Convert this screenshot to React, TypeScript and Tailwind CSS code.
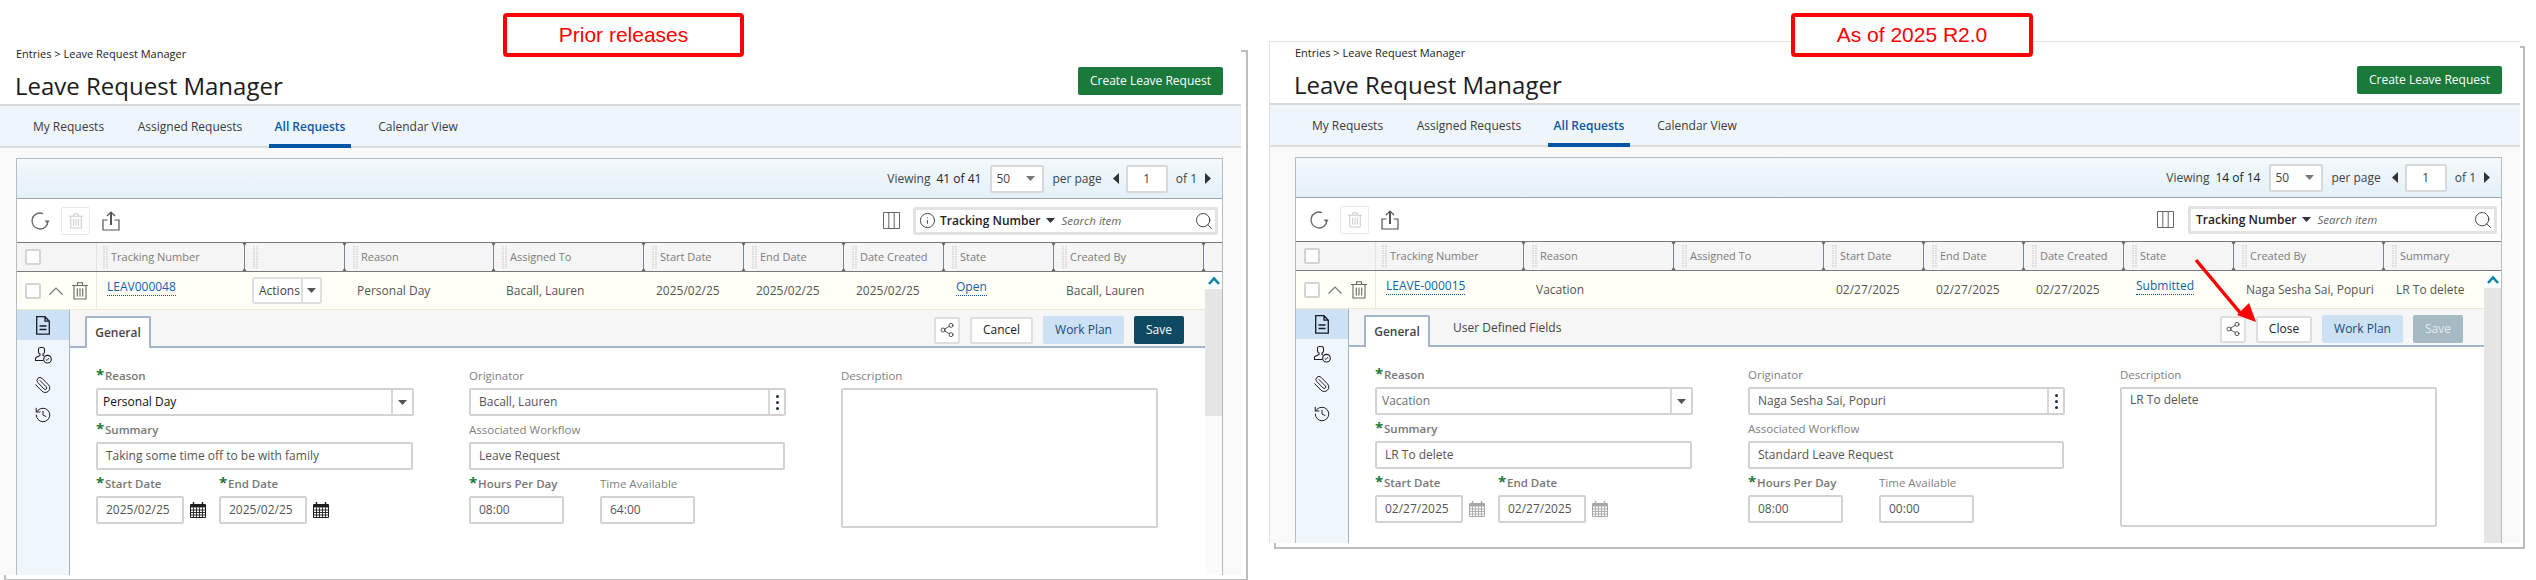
import React from "react";
import { Info, Search, Paperclip, History, Share2 } from "lucide-react";

type Col = { w: string; label: string; grip?: boolean; cell?: React.ReactNode; first?: boolean };

const Caret = ({ c = "#555" }: { c?: string }) => (
  <svg width="9" height="5" viewBox="0 0 9 5" className="shrink-0"><path d="M0 0h9L4.5 5z" fill={c} /></svg>
);

const Sep = () => (
  <svg width="5" height="28" viewBox="0 0 5 28" className="shrink-0 -ml-[2px]">
    <path d="M2.5 0v28" stroke="#7b8590" strokeWidth="1" />
    <path d="M.5 0h4L3 2.5H2zM.5 28h4L3 25.5H2z" fill="#666" />
  </svg>
);

const Grip = () => (
  <svg width="5" height="23" viewBox="0 0 5 23" className="shrink-0">
    <path d="M1 0v23M4 0v23" stroke="#d2d2d2" strokeWidth="1.5" strokeDasharray="1.5 1" />
  </svg>
);

const Refresh = () => (
  <svg width="20" height="20" viewBox="0 0 20 20" fill="none" className="shrink-0">
    <path d="M13 2.6A8 8 0 1 0 18 10" stroke="#666" strokeWidth="1.3" />
    <path d="M14.6 9.4h5l-2.5 3z" fill="#666" />
  </svg>
);

const Trash = ({ c, s = 16 }: { c: string; s?: number }) => (
  <svg width={s} height={s + 2} viewBox="0 0 16 18" fill="none" className="shrink-0" stroke={c} strokeWidth="1.1">
    <path d="M0 3.5h16M5.5 3.5V.8h5v2.7M2 3.5V17h12V3.5M5.3 6.5v8M8 6.5v8M10.7 6.5v8" />
  </svg>
);

const Upload = () => (
  <svg width="18" height="20" viewBox="0 0 18 20" fill="none" className="shrink-0" stroke="#555" strokeWidth="1.2">
    <path d="M5.5 9H1v10h16V9h-4.5" />
    <path d="M9 14V1.5" strokeWidth="2" />
    <path d="M5 5l4-4 4 4" />
  </svg>
);

const ColumnsIcon = () => (
  <svg width="17" height="17" viewBox="0 0 17 17" fill="none" stroke="#666" strokeWidth="1" className="shrink-0">
    <path d="M.5.5h16v16H.5zM5.8.5v16M11.2.5v16" />
  </svg>
);

const Chev = () => (
  <svg width="14" height="8" viewBox="0 0 14 8" fill="none" stroke="#777" strokeWidth="1.2" className="shrink-0"><path d="M.5 7.5L7 1l6.5 6.5" /></svg>
);

const DocIcon = () => (
  <svg width="14" height="19" viewBox="0 0 14 19" fill="none" stroke="#1a1a2a" strokeWidth="1.3">
    <path d="M.7.7h8.3l4.3 4.5v13H.7zM9 .7v4.5h4.3M3.5 10h7M3.5 13.5h7" />
  </svg>
);

const PersonIcon = () => (
  <svg width="17" height="18" viewBox="0 0 17 18" fill="none" stroke="#1a1a2a" strokeWidth="1.1">
    <path d="M5 1.5h2.5a2 2 0 0 1 2 2v2.5a2 2 0 0 1-1.5 2v1.5l1 .5M4.8 1.5a2 2 0 0 0-1.3 2v2.5a2 2 0 0 0 1.5 2v1.5L1 11.5a1.5 1.5 0 0 0-.6 1.2v1.8h8" />
    <circle cx="12.5" cy="13.2" r="3.8" />
    <path d="M10.8 13.4l1.2 1.1 2-2.4" strokeWidth=".9" />
  </svg>
);

const Cal = ({ c }: { c: string }) => (
  <svg width="16" height="16" viewBox="0 0 16 16" fill="none" className="shrink-0">
    <path d="M.5 2.5h15v13H.5z" stroke={c} />
    <path d="M1 2.5h14v3H1z" fill={c} />
    <path d="M3.5 0v3.5M12.5 0v3.5" stroke={c} strokeWidth="1.4" />
    <path d="M.5 8h15M.5 10.5h15M.5 13h15M3.5 5.5v10M6.5 5.5v10M9.5 5.5v10M12.5 5.5v10" stroke={c} strokeWidth=".9" />
  </svg>
);

const Link = ({ children }: { children: React.ReactNode }) => (
  <span className="inline-block text-[12px] leading-[15px] pb-[1px] -mt-[6px] text-[#1261ac] border-b border-dotted border-[#0a56a5]">{children}</span>
);

const Check = () => <div className="w-[16px] h-[16px] border-2 border-[#d4d4d4] rounded-[2px] bg-white shrink-0" />;

const Label = ({ req, children }: { req?: boolean; children: React.ReactNode }) => (
  <div className="h-[26px] flex items-end pb-[4px]">
    <span className={`text-[11.5px] leading-[16px] flex ${req ? "text-[#777] font-semibold" : "text-[#808080]"}`}>
      {req && <span className="text-[#1a7a3c] font-bold text-[15px] leading-[15px] w-[9px] -mt-[1px]">*</span>}
      {children}
    </span>
  </div>
);

const boxCls = "h-[28px] border-2 border-[#d2d2d2] rounded-[2px] bg-white flex items-center text-[12px] text-[#555]";

function Form({ d }: { d: Data }) {
  const cal = d.disabled ? "#a6a6a6" : "#1e1e1e";
  const v = d.disabled ? "text-[#6f6f6f]" : "text-[#111]";
  return (
    <div className="flex pl-[26px] pt-[14px] gap-[55px]">
      <div className="w-[318px] shrink-0">
        <Label req>Reason</Label>
        <div className={`${boxCls} pl-[5px]`}>
          <span className={`flex-1 ${v}`}>{d.reason}</span>
          <div className="w-[21px] h-full border-l-2 border-[#d8d8d8] flex items-center justify-center"><Caret /></div>
        </div>
        <Label req>Summary</Label>
        <div className={`${boxCls} w-[317px] pl-[8px]`}>{d.summary}</div>
        <div className="flex">
          <div className="w-[123px]">
            <Label req>Start Date</Label>
            <div className="flex items-center gap-[6px]">
              <div className={`${boxCls} w-[88px] pl-[8px]`}>{d.date}</div>
              <Cal c={cal} />
            </div>
          </div>
          <div>
            <Label req>End Date</Label>
            <div className="flex items-center gap-[6px]">
              <div className={`${boxCls} w-[88px] pl-[8px]`}>{d.date}</div>
              <Cal c={cal} />
            </div>
          </div>
        </div>
      </div>
      <div className="w-[317px] shrink-0">
        <Label>Originator</Label>
        <div className={`${boxCls} pl-[8px]`}>
          <span className="flex-1">{d.orig}</span>
          <div className="w-[16px] h-full border-l-2 border-[#d8d8d8] flex flex-col items-center justify-center gap-[3px]">
            <i className="w-[3px] h-[3px] rounded-full bg-[#1b2a4a]" />
            <i className="w-[3px] h-[3px] rounded-full bg-[#1b2a4a]" />
            <i className="w-[3px] h-[3px] rounded-full bg-[#1b2a4a]" />
          </div>
        </div>
        <Label>Associated Workflow</Label>
        <div className={`${boxCls} w-[316px] pl-[8px]`}>{d.flow}</div>
        <div className="flex">
          <div className="w-[131px]">
            <Label req>Hours Per Day</Label>
            <div className={`${boxCls} w-[95px] pl-[8px]`}>08:00</div>
          </div>
          <div>
            <Label>Time Available</Label>
            <div className={`${boxCls} w-[95px] pl-[8px]`}>{d.avail}</div>
          </div>
        </div>
      </div>
      <div className="w-[317px] shrink-0">
        <Label>Description</Label>
        <div className="h-[140px] border-2 border-[#d2d2d2] rounded-[2px] bg-white text-[12px] text-[#555] px-[8px] py-[2px]">{d.desc}</div>
      </div>
    </div>
  );
}

type Data = {
  isRight: boolean;
  disabled: boolean;
  count: string;
  cols: Col[];
  reason: string;
  summary: string;
  date: string;
  orig: string;
  flow: string;
  avail: string;
  desc: string;
  closeLabel: string;
};

function Panel({ d }: { d: Data }) {
  const inset = d.isRight ? "ml-[9px]" : "";
  return (
    <div className={`relative flex flex-col shrink-0 ${d.isRight ? "w-[1251px] h-[502px] ml-[28px] border-t border-l border-[#e2e2e2]" : "w-[1241px] h-[534px] border-t border-transparent"} mt-[41px]`}>
      <div className={`absolute border-2 border-[#bdbdbd] -z-10 ${d.isRight ? "left-[4px] top-[4px] -right-[5px] -bottom-[6px]" : "left-[4px] top-[8px] -right-[7px] -bottom-[6px]"}`} />
      <header className={`bg-white border-b-2 border-[#d8d8d8] flex justify-between shrink-0 ${d.isRight ? "h-[63px]" : "h-[64px] pt-[1px]"}`}>
        <div className={`${inset} pl-[15px] pt-[4px]`}>
          <div className="text-[11px] leading-[14px] text-[#222] pl-[1px]">Entries &gt; Leave Request Manager</div>
          <h1 className="text-[24px] leading-[32px] text-[#1c1c1c] mt-[9px]">Leave Request Manager</h1>
        </div>
        <button className="mt-[24px] mr-[18px] w-[145px] h-[28px] bg-[#1a7a3c] rounded-[2px] text-white text-[12px]">Create Leave Request</button>
      </header>
      <nav className="h-[42px] bg-[#eff6fb] border-b-2 border-[#dcdcdc] shrink-0">
        <div className={`${inset} pl-[26px] flex gap-[20px] h-[42px] text-[12px] text-[#3a3a3a]`}>
          <span className="w-[85px] h-full flex items-center justify-center">My Requests</span>
          <span className="w-[118px] h-full flex items-center justify-center">Assigned Requests</span>
          <span className="w-[82px] h-full flex items-center justify-center text-[#0a56a5] font-semibold border-b-4 border-[#0054a6] pt-[4px]">All Requests</span>
          <span className="w-[94px] h-full flex items-center justify-center">Calendar View</span>
        </div>
      </nav>
      <div className="flex-1 bg-[#f9f9f9] pt-[10px] min-h-0 flex">
        <div className={`${d.isRight ? "ml-[25px]" : "ml-[16px]"} w-[1207px] border-t border-l border-r border-[#b5bdc4] flex flex-col bg-white min-h-0 overflow-hidden`}>
          <div className="h-[40px] shrink-0 bg-gradient-to-b from-[#f4f9fc] to-[#e3f0f8] border-b border-[#9aa4ab] flex items-center justify-end pr-[11px] text-[12px] text-[#444]">
            <span>Viewing</span>
            <span className="ml-[6px] text-[#222]">{d.count}</span>
            <div className="ml-[9px] w-[54px] h-[28px] border-2 border-[#d8d8d8] rounded-[2px] bg-white flex items-center justify-between pl-[4px] pr-[7px]"><span>50</span><Caret c="#777" /></div>
            <span className="ml-[8px]">per page</span>
            <svg width="6" height="11" viewBox="0 0 6 11" className="ml-[11px]"><path d="M6 0v11L0 5.5z" fill="#333" /></svg>
            <div className="ml-[7px] w-[42px] h-[28px] border-2 border-[#d8d8d8] rounded-[2px] bg-white flex items-center justify-center">1</div>
            <span className="ml-[8px]">of 1</span>
            <svg width="6" height="11" viewBox="0 0 6 11" className="ml-[8px]"><path d="M0 0v11l6-5.5z" fill="#333" /></svg>
          </div>
          <div className="h-[43px] shrink-0 flex items-center pl-[13px] pr-[4px]">
            <Refresh />
            <div className="ml-[11px] w-[29px] h-[28px] border border-[#e8e8e8] rounded-[2px] flex items-center justify-center"><Trash c="#c8c8c8" s={14} /></div>
            <div className="ml-[12px]"><Upload /></div>
            <div className={`ml-auto ${d.isRight ? "mr-[14px]" : "mr-[13px]"}`}><ColumnsIcon /></div>
            <div className={`${d.isRight ? "w-[309px]" : "w-[305px]"} h-[28px] border-[3px] border-[#e2e2e2] rounded-[2px] bg-white flex items-center text-[#444]`}>
              {!d.isRight && <Info size={17} strokeWidth={1.25} className="ml-[3px] mr-[4px] shrink-0 text-[#333]" />}
              <span className={`text-[12px] font-semibold text-[#222] whitespace-nowrap ${d.isRight ? "ml-[5px]" : ""}`}>Tracking Number</span>
              <span className="ml-[5px] mr-[7px]"><Caret c="#334" /></span>
              <span className="text-[11.5px] italic text-[#666]">Search item</span>
              <Search size={20} strokeWidth={1} className="ml-auto mr-[1px] text-[#222]" />
            </div>
          </div>
          <div className="h-[30px] shrink-0 bg-[#f5f5f5] border-y border-[#7a7a7a] flex text-[11px] text-[#7c7c7c]">
            <div className="w-[80px] shrink-0 flex items-center pl-[8px] border-r border-[#e3e3e3]"><Check /></div>
            {d.cols.map((c, i) => (
              <div key={i} className={`flex items-center shrink-0 ${c.w}`}>
                {!c.first && <Sep />}
                {c.grip && <span className="ml-[6px]"><Grip /></span>}
                <span className="ml-[3px] whitespace-nowrap">{c.label}</span>
              </div>
            ))}
          </div>
          <div className="flex-1 flex min-h-0">
            <div className="flex-1 min-w-0 flex flex-col">
              <div className="h-[38px] shrink-0 bg-[#fffff7] border-b border-[#ece9d0] flex text-[12px] text-[#555]">
                <div className="w-[80px] shrink-0 flex items-center pl-[8px] border-r border-[#eceadb]">
                  <Check />
                  <span className="ml-[8px]"><Chev /></span>
                  <span className="ml-[9px]"><Trash c="#666" /></span>
                </div>
                {d.cols.map((c, i) => (
                  <div key={i} className={`flex items-center shrink-0 whitespace-nowrap ${c.first ? "pl-[10px]" : "pl-[13px]"} ${c.w}`}>{c.cell}</div>
                ))}
              </div>
              <div className="flex-1 flex min-h-0">
                <aside className="w-[53px] shrink-0 bg-[#f0f7fc] border-r border-[#a3b4c6] flex flex-col">
                  <div className="h-[30px] bg-[#cde1f5] flex items-center justify-center"><DocIcon /></div>
                  <div className="h-[30px] flex items-center justify-center"><PersonIcon /></div>
                  <div className="h-[30px] flex items-center justify-center"><Paperclip size={18} strokeWidth={1.3} className="text-[#1a1a2a] -scale-x-100" /></div>
                  <div className="h-[30px] flex items-center justify-center"><History size={18} strokeWidth={1.3} className="text-[#1a1a2a]" /></div>
                </aside>
                <div className="flex-1 min-w-0 flex flex-col">
                  <div className="h-[38px] shrink-0 bg-[#f6f6f6] border-b-2 border-[#a5b6ca] flex items-end pl-[15px] pr-[21px] relative">
                    <div className="w-[66px] h-[32px] -mb-[2px] bg-white border-2 border-b-0 border-[#a5b6ca] rounded-t-[2px] flex items-center justify-center text-[12px] font-semibold text-[#444]">General</div>
                    {d.isRight && <span className="ml-[23px] mb-[8px] text-[12px] text-[#444]">User Defined Fields</span>}
                    <div className="ml-auto self-start mt-[6px] flex items-center">
                      <div className="w-[26px] h-[27px] border-2 border-[#dedede] rounded-[2px] bg-white flex items-center justify-center"><Share2 size={16} strokeWidth={1.1} className="text-[#222]" /></div>
                      <button className={`ml-[10px] ${d.isRight ? "w-[56px]" : "w-[63px]"} h-[27px] border-2 border-[#dedede] rounded-[2px] bg-white text-[12px] text-[#222]`}>{d.closeLabel}</button>
                      <button className="ml-[10px] w-[81px] h-[28px] bg-[#cde1f5] rounded-[2px] text-[12px] text-[#1c4a6e]">Work Plan</button>
                      <button className={`ml-[10px] w-[50px] h-[28px] rounded-[2px] text-[12px] ${d.disabled ? "bg-[#a6bac3] text-[#e2eaee]" : "bg-[#0f4a63] text-white"}`}>Save</button>
                    </div>
                  </div>
                  <Form d={d} />
                </div>
              </div>
            </div>
            <div className="w-[17px] shrink-0 flex flex-col bg-[#fbfbfb]">
              <div className="h-[17px] bg-white flex items-center justify-center shrink-0">
                <svg width="12" height="9" viewBox="0 0 12 9" fill="none" stroke="#0a84a8" strokeWidth="2.6"><path d="M1 8l5-5.5L11 8" /></svg>
              </div>
              <div className={`bg-[#e5e5e5] ${d.isRight ? "flex-1" : "h-[127px]"}`} />
            </div>
          </div>
        </div>
      </div>
    </div>
  );
}

const leftData: Data = {
  isRight: false,
  disabled: false,
  count: "41 of 41",
  reason: "Personal Day",
  summary: "Taking some time off to be with family",
  date: "2025/02/25",
  orig: "Bacall, Lauren",
  flow: "Leave Request",
  avail: "64:00",
  desc: "",
  closeLabel: "Cancel",
  cols: [
    { w: "w-[147px]", label: "Tracking Number", grip: true, first: true, cell: <Link>LEAV000048</Link> },
    { w: "w-[100px]", label: "", grip: true, cell: (
      <div className="-ml-[5px] w-[70px] h-[27px] border-2 border-[#dedede] rounded-[3px] bg-white flex items-center text-[12px] text-[#444]">
        <span className="w-[49px] pl-[5px] border-r-2 border-[#dedede] h-full flex items-center">Actions</span>
        <span className="flex-1 flex justify-center"><Caret /></span>
      </div>
    ) },
    { w: "w-[149px]", label: "Reason", grip: true, cell: "Personal Day" },
    { w: "w-[150px]", label: "Assigned To", grip: true, cell: "Bacall, Lauren" },
    { w: "w-[100px]", label: "Start Date", grip: true, cell: "2025/02/25" },
    { w: "w-[100px]", label: "End Date", grip: true, cell: "2025/02/25" },
    { w: "w-[100px]", label: "Date Created", grip: true, cell: "2025/02/25" },
    { w: "w-[110px]", label: "State", grip: true, cell: <Link>Open</Link> },
    { w: "w-[150px]", label: "Created By", grip: true, cell: "Bacall, Lauren" },
    { w: "w-[2px]", label: "" },
  ],
};

const rightData: Data = {
  isRight: true,
  disabled: true,
  count: "14 of 14",
  reason: "Vacation",
  summary: "LR To delete",
  date: "02/27/2025",
  orig: "Naga Sesha Sai, Popuri",
  flow: "Standard Leave Request",
  avail: "00:00",
  desc: "LR To delete",
  closeLabel: "Close",
  cols: [
    { w: "w-[147px]", label: "Tracking Number", grip: true, first: true, cell: <Link>LEAVE-000015</Link> },
    { w: "w-[150px]", label: "Reason", grip: true, cell: "Vacation" },
    { w: "w-[150px]", label: "Assigned To", grip: true, cell: "" },
    { w: "w-[100px]", label: "Start Date", grip: true, cell: "02/27/2025" },
    { w: "w-[100px]", label: "End Date", grip: true, cell: "02/27/2025" },
    { w: "w-[100px]", label: "Date Created", grip: true, cell: "02/27/2025" },
    { w: "w-[110px]", label: "State", grip: true, cell: <Link>Submitted</Link> },
    { w: "w-[150px]", label: "Created By", grip: true, cell: "Naga Sesha Sai, Popuri" },
    { w: "w-[100px]", label: "Summary", grip: true, cell: "LR To delete" },
  ],
};

const noteCls = "absolute top-[13px] h-[44px] border-4 border-[#ff0000] rounded-[4px] bg-white flex items-center justify-center text-[#ff0000] text-[21px] font-['Liberation_Sans',Arial,sans-serif]";

export default function App() {
  return (
    <div className="relative isolate w-[2536px] h-[580px] overflow-hidden bg-white flex items-start font-['Open_Sans','Liberation_Sans',sans-serif]">
      <Panel d={leftData} />
      <Panel d={rightData} />
      <div className={`${noteCls} left-[503px] w-[241px]`}>Prior releases</div>
      <div className={`${noteCls} left-[1791px] w-[242px]`}>As of 2025 R2.0</div>
      <svg className="absolute left-[2190px] top-[255px]" width="72" height="72" viewBox="0 0 72 72">
        <path d="M6 5L52 60" stroke="#ff0000" strokeWidth="3.5" />
        <path d="M66 67L47 60L59 48z" fill="#ff0000" />
      </svg>
    </div>
  );
}
